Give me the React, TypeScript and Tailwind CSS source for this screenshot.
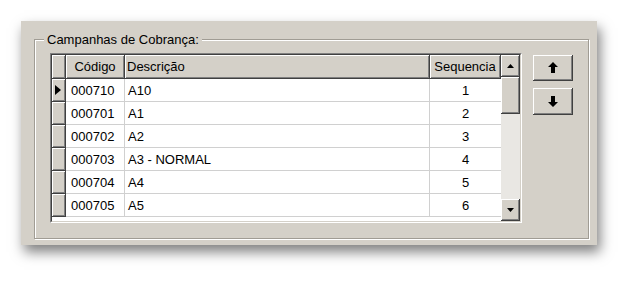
import React from 'react';

type Row = { codigo: string; descricao: string; seq: number };

const rows: Row[] = [
  { codigo: '000710', descricao: 'A10', seq: 1 },
  { codigo: '000701', descricao: 'A1', seq: 2 },
  { codigo: '000702', descricao: 'A2', seq: 3 },
  { codigo: '000703', descricao: 'A3 - NORMAL', seq: 4 },
  { codigo: '000704', descricao: 'A4', seq: 5 },
  { codigo: '000705', descricao: 'A5', seq: 6 },
];

// classic win32 raised look
const raised =
  'bg-[#d4d0c8] border-r border-b border-[#404040] shadow-[inset_1px_1px_0_#ffffff,inset_-1px_-1px_0_#808080]';

const ArrowIcon: React.FC<{ down?: boolean }> = ({ down }) => (
  <svg width="10" height="11" viewBox="0 0 10 11" className={down ? 'rotate-180' : ''}>
    <polygon points="5,0 10,5 7,5 7,11 3,11 3,5 0,5" fill="#000" />
  </svg>
);

const SmallTri: React.FC<{ down?: boolean }> = ({ down }) => (
  <svg width="7" height="4" viewBox="0 0 7 4">
    <polygon points={down ? '0,0 7,0 3.5,4' : '3.5,0 7,4 0,4'} fill="#000" />
  </svg>
);

const App: React.FC = () => {
  return (
    <div
      className="w-[639px] h-[288px] bg-white pl-[21px] pt-[21px] text-[13px] text-black"
      style={{ fontFamily: '"Liberation Sans", Arial, sans-serif' }}
    >
      <div className="w-[576px] h-[224px] bg-[#d4d0c8] shadow-[3px_7px_12px_rgba(0,0,0,0.5)] pl-[13px] pr-[8px] pt-[11px]">
        <fieldset className="h-[207px] border border-[#a09c94] shadow-[inset_1px_1px_0_#ffffff,1px_1px_0_#ffffff]">
          <legend className="ml-[9px] px-[3px] leading-[15px] bg-[#d4d0c8]">Campanhas de Cobrança:</legend>
          <div className="flex mt-[6px] ml-[15px]">
            {/* grid */}
            <div className="w-[472px] h-[170px] border border-[#808080] border-r-white border-b-white">
              <div className="h-full border border-[#404040] border-r-[#d4d0c8] border-b-[#d4d0c8] flex bg-white">
                <div className="w-[449px] flex flex-col">
                  <div className="flex h-[24px]">
                    <div className={`w-[14px] ${raised}`} />
                    <div className={`w-[59px] ${raised} flex items-center justify-center pt-[1px]`}>Código</div>
                    <div className={`w-[305px] ${raised} flex items-center pl-[2px] pt-[1px]`}>Descrição</div>
                    <div className={`w-[71px] ${raised} flex items-center justify-center pt-[1px]`}>Sequencia</div>
                  </div>
                  {rows.map((r, i) => (
                    <div key={r.codigo} className="flex h-[23px]">
                      <div className={`w-[14px] ${raised} flex items-center pl-[3px]`}>
                        {i === 0 && (
                          <svg width="6" height="10" viewBox="0 0 6 10">
                            <polygon points="0,0 6,5 0,10" fill="#000" />
                          </svg>
                        )}
                      </div>
                      <div className="w-[59px] border-r border-b border-[#d0d0d0] flex items-center pl-[5px] pt-[2px]">
                        {r.codigo}
                      </div>
                      <div className="w-[305px] border-r border-b border-[#d0d0d0] flex items-center pl-[3px] pt-[2px]">
                        {r.descricao}
                      </div>
                      <div className="w-[71px] border-b border-[#d0d0d0] flex items-center justify-center pt-[2px]">
                        {r.seq}
                      </div>
                    </div>
                  ))}
                </div>
                {/* scrollbar */}
                <div className="w-[19px] flex flex-col bg-[#e9e7e3]">
                  <div className={`h-[22px] ${raised} flex items-center justify-center`}>
                    <SmallTri />
                  </div>
                  <div className={`h-[37px] ${raised}`} />
                  <div className="flex-1" />
                  <div className={`h-[22px] ${raised} flex items-center justify-center`}>
                    <SmallTri down />
                  </div>
                </div>
              </div>
            </div>
            {/* move buttons */}
            <div className="flex flex-col gap-[7px] ml-[11px] mt-[2px]">
              <button className={`w-[40px] h-[26px] ${raised} flex items-center justify-center`}>
                <ArrowIcon />
              </button>
              <button className={`w-[40px] h-[27px] ${raised} flex items-center justify-center`}>
                <ArrowIcon down />
              </button>
            </div>
          </div>
        </fieldset>
      </div>
    </div>
  );
};

export default App;
